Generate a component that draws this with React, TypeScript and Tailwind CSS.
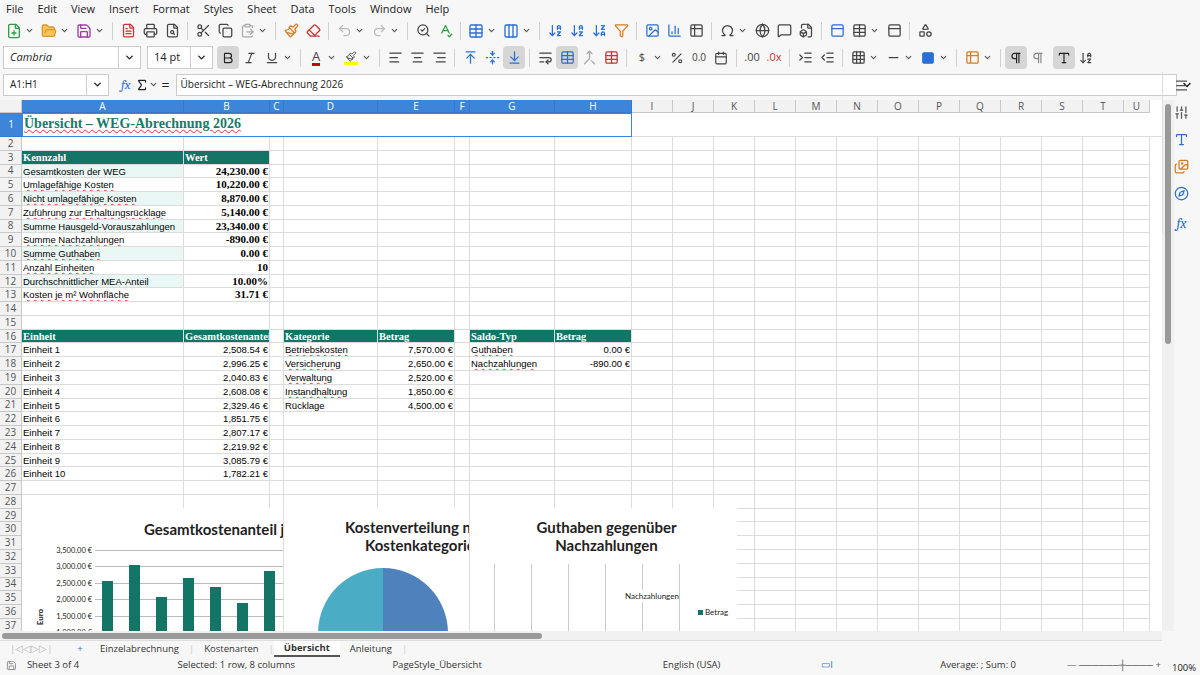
import React from 'react';
import {
  FilePlus, FolderOpen, Save, FileText, Printer, FileSearch, Scissors, Copy, ClipboardPaste, Paintbrush, Eraser,
  Undo2, Redo2, SearchCheck, SpellCheck, Table, Columns3, ArrowDownAZ, ArrowDownZA, Filter, Image, BarChart3,
  Table2, Omega, Globe, MessageSquare, FileBox, PanelTop, Shapes, ChevronDown, Bold, Italic, Underline,
  AlignLeft, AlignCenter, AlignRight, ArrowUpToLine, FoldVertical, ArrowDownToLine, WrapText, Merge,
  Percent, Calendar, Indent, Outdent, Grid3x3, Minus, Square, Pilcrow, Sigma, Menu, Sliders, Type, Images, Compass,
} from 'lucide-react';

const cols = [
  ['A', 162], ['B', 86], ['C', 14], ['D', 94], ['E', 77], ['F', 15], ['G', 85], ['H', 77],
  ['I', 41], ['J', 41], ['K', 41], ['L', 41], ['M', 41], ['N', 41], ['O', 41], ['P', 41], ['Q', 41], ['R', 41], ['S', 41], ['T', 41], ['U', 26],
] as const;

type Cell = { t: string; k?: 'h' | 'l' | 'lb' | 'v' | 'n' | 'sp' };
const kz = [
  ['Gesamtkosten der WEG', '24,230.00 €'], ['Umlagefähige Kosten', '10,220.00 €'], ['Nicht umlagefähige Kosten', '8,870.00 €'],
  ['Zuführung zur Erhaltungsrücklage', '5,140.00 €'], ['Summe Hausgeld-Vorauszahlungen', '23,340.00 €'], ['Summe Nachzahlungen', '-890.00 €'],
  ['Summe Guthaben', '0.00 €'], ['Anzahl Einheiten', '10'], ['Durchschnittlicher MEA-Anteil', '10.00%'], ['Kosten je m² Wohnfläche', '31.71 €'],
];
const einh = ['2,508.54 €', '2,996.25 €', '2,040.83 €', '2,608.08 €', '2,329.46 €', '1,851.75 €', '2,807.17 €', '2,219.92 €', '3,085.79 €', '1,782.21 €'];
const kat = [['Betriebskosten', '7,570.00 €'], ['Versicherung', '2,650.00 €'], ['Verwaltung', '2,520.00 €'], ['Instandhaltung', '1,850.00 €'], ['Rücklage', '4,500.00 €']];
const sal = [['Guthaben', '0.00 €'], ['Nachzahlungen', '-890.00 €']];

function rowCells(r: number): Record<number, Cell> {
  const c: Record<number, Cell> = {};
  if (r === 3) { c[0] = { t: 'Kennzahl', k: 'h' }; c[1] = { t: 'Wert', k: 'h' }; }
  if (r >= 4 && r <= 13) {
    const [a, b] = kz[r - 4];
    const alt = r % 2 === 0;
    c[0] = { t: a, k: alt ? 'lb' : 'l' }; c[1] = { t: b, k: 'v' };
  }
  if (r === 16) {
    c[0] = { t: 'Einheit', k: 'h' }; c[1] = { t: 'Gesamtkostenanteil', k: 'h' };
    c[3] = { t: 'Kategorie', k: 'h' }; c[4] = { t: 'Betrag', k: 'h' };
    c[6] = { t: 'Saldo-Typ', k: 'h' }; c[7] = { t: 'Betrag', k: 'h' };
  }
  if (r >= 17 && r <= 26) { c[0] = { t: `Einheit ${r - 16}` }; c[1] = { t: einh[r - 17], k: 'n' }; }
  if (r >= 17 && r <= 21) { c[3] = { t: kat[r - 17][0], k: 'sp' }; c[4] = { t: kat[r - 17][1], k: 'n' }; }
  if (r >= 17 && r <= 18) { c[6] = { t: sal[r - 17][0], k: 'sp' }; c[7] = { t: sal[r - 17][1], k: 'n' }; }
  return c;
}

const I = ({ children }: { children: React.ReactNode }) => (
  <div className="flex h-[22px] min-w-[22px] items-center justify-center px-[2px] text-[#444]">{children}</div>
);
const Dd = () => <ChevronDown size={9} strokeWidth={3} className="mr-1 text-[#555]" />;
const Sep = () => <div className="mx-1 h-[18px] w-px bg-[#d0d0d0]" />;

function Row({ r }: { r: number }) {
  const cells = rowCells(r);
  return (
    <div className="flex h-[13.77px]">
      <div className="flex w-[22px] shrink-0 items-center justify-center border-b border-r border-[#c8c8c8] bg-[#f2f2f2] text-[10px] text-[#555]">{r}</div>
      {cols.map(([n, w], i) => {
        const c = cells[i];
        let cls = 'border-b border-r border-[#dcdcdc] whitespace-nowrap px-[1px] text-[9.5px] leading-[13px] text-black';
        let font = '"Liberation Sans", sans-serif';
        if (c?.k === 'h') { cls += ' bg-[#127566] text-white font-bold'; font = '"Liberation Serif", serif'; }
        if (c?.k === 'lb') cls += ' bg-[#eaf8f5]';
        if (c?.k === 'v') { cls += ' text-right font-bold text-[11px]'; font = '"Liberation Serif", serif'; }
        if (c?.k === 'n') cls += ' text-right';
        const spell = c && (c.k === 'l' || c.k === 'lb' || c.k === 'sp');
        return (
          <div key={n} style={{ width: w, fontFamily: font }} className={`${cls} shrink-0 overflow-hidden`}>
            {c && (
              <span className={spell ? 'underline decoration-wavy decoration-[#d33] decoration-1' : c.k === 'h' ? 'text-[10.5px]' : ''}>{c.t}</span>
            )}
          </div>
        );
      })}
    </div>
  );
}

const bars = [2508, 2996, 2041, 2608, 2329, 1852, 2807];

export default function App() {
  return (
    <div className="flex h-[675px] w-[1200px] flex-col overflow-hidden bg-[#f7f7f7] text-[#222]" style={{ fontFamily: '"Open Sans", "Noto Sans", sans-serif' }}>
      <div className="flex h-[18px] items-center gap-[14px] px-[6px] text-[11px]">
        {['File', 'Edit', 'View', 'Insert', 'Format', 'Styles', 'Sheet', 'Data', 'Tools', 'Window', 'Help'].map(m => <span key={m}>{m}</span>)}
      </div>
      <div className="flex h-[25px] items-center px-[3px]">
        <I><FilePlus size={16} className="text-[#2f9e44]" /></I><Dd />
        <I><FolderOpen size={16} className="fill-[#f6c35c] text-[#d99a2b]" /></I><Dd />
        <I><Save size={16} className="text-[#a03ca8]" /></I><Dd /><Sep />
        <I><FileText size={15} className="text-[#c33]" /></I><I><Printer size={15} /></I><I><FileSearch size={15} /></I><Sep />
        <I><Scissors size={15} /></I><I><Copy size={15} /></I><I><ClipboardPaste size={15} className="text-[#aaa]" /></I><Dd /><Sep />
        <I><Paintbrush size={15} className="text-[#d97a1c]" /></I><I><Eraser size={15} className="text-[#c33]" /></I><Sep />
        <I><Undo2 size={15} className="text-[#bbb]" /></I><Dd /><I><Redo2 size={15} className="text-[#bbb]" /></I><Dd /><Sep />
        <I><SearchCheck size={15} /></I><I><SpellCheck size={15} className="text-[#2f9e44]" /></I><Sep />
        <I><Table size={16} className="text-[#2a6fd6]" /></I><Dd /><I><Columns3 size={16} className="text-[#2a6fd6]" /></I><Dd /><Sep />
        <I><ArrowDownAZ size={15} className="text-[#2a6fd6]" /></I><I><ArrowDownAZ size={15} className="text-[#2a6fd6]" /></I><I><ArrowDownZA size={15} className="text-[#2a6fd6]" /></I><I><Filter size={15} className="text-[#d97a1c]" /></I><Sep />
        <I><Image size={15} className="text-[#2a6fd6]" /></I><I><BarChart3 size={15} className="text-[#2a6fd6]" /></I><I><Table2 size={15} /></I><Sep />
        <I><Omega size={15} /></I><Dd /><I><Globe size={15} /></I><I><MessageSquare size={15} /></I><I><FileBox size={15} /></I><Sep />
        <I><PanelTop size={15} className="text-[#2a6fd6]" /></I><I><Table size={15} /></I><Dd /><I><PanelTop size={15} /></I><Sep /><I><Shapes size={15} /></I>
      </div>
      <div className="flex h-[29px] items-center px-[3px]">
        <div className="flex h-[23px] w-[138px] items-center justify-between border border-[#ccc] bg-white pl-[6px] text-[11px] italic">Cambria<span className="flex h-full w-[22px] items-center justify-center border-l border-[#ccc]"><ChevronDown size={11} strokeWidth={3} /></span></div>
        <div className="ml-[6px] flex h-[23px] w-[66px] items-center justify-between border border-[#ccc] bg-white pl-[6px] text-[11px]">14 pt<span className="flex h-full w-[22px] items-center justify-center border-l border-[#ccc]"><ChevronDown size={11} strokeWidth={3} /></span></div>
        <div className="ml-[4px] flex h-[23px] w-[22px] items-center justify-center rounded bg-[#d6d6d6]"><Bold size={14} /></div>
        <I><Italic size={14} /></I><I><Underline size={14} /></I><Dd /><Sep />
        <I><span className="border-b-[3px] border-[#c00] text-[13px] leading-[14px]">A</span></I><Dd />
        <I><Paintbrush size={14} className="border-b-[3px] border-[#ff0]" /></I><Dd /><Sep />
        <I><AlignLeft size={15} /></I><I><AlignCenter size={15} /></I><I><AlignRight size={15} /></I><Sep />
        <I><ArrowUpToLine size={15} className="text-[#2a6fd6]" /></I><I><FoldVertical size={15} className="text-[#2a6fd6]" /></I>
        <div className="flex h-[23px] w-[22px] items-center justify-center rounded bg-[#d6d6d6]"><ArrowDownToLine size={15} className="text-[#2a6fd6]" /></div><Sep />
        <I><WrapText size={15} /></I>
        <div className="flex h-[23px] w-[22px] items-center justify-center rounded bg-[#d6d6d6]"><Table size={15} className="text-[#2a6fd6]" /></div>
        <I><Merge size={15} className="text-[#aaa]" /></I><I><Table size={15} className="text-[#c33]" /></I><Sep />
        <I><span className="text-[11px]">$</span></I><Dd /><I><Percent size={14} /></I><I><span className="text-[10px]">0.0</span></I><I><Calendar size={14} /></I><Sep />
        <I><span className="text-[11px]">.00</span></I><I><span className="text-[11px] text-[#c33]">.0x</span></I><Sep />
        <I><Indent size={15} /></I><I><Outdent size={15} /></I><Sep />
        <I><Grid3x3 size={15} /></I><Dd /><I><Minus size={15} /></I><Dd /><I><Square size={14} className="fill-[#2a6fd6] text-[#2a6fd6]" /></I><Dd /><Sep />
        <I><Table2 size={15} className="text-[#d97a1c]" /></I><Dd /><Sep />
        <div className="flex h-[23px] w-[22px] items-center justify-center rounded bg-[#d6d6d6]"><Pilcrow size={14} /></div><I><Pilcrow size={14} className="text-[#888]" /></I>
        <div className="ml-1 flex h-[23px] w-[22px] items-center justify-center rounded bg-[#d6d6d6]"><Type size={14} /></div><I><ArrowDownAZ size={14} /></I>
      </div>
      <div className="flex h-[25px] items-center px-[3px] text-[10px]">
        <div className="flex h-[22px] w-[106px] items-center justify-between border border-[#ccc] bg-white pl-[6px]">A1:H1<span className="flex h-full w-[22px] items-center justify-center border-l border-[#ccc]"><ChevronDown size={11} strokeWidth={3} /></span></div>
        <span className="ml-[12px] font-serif text-[13px] italic text-[#2a6fd6]">fx</span>
        <Sigma size={14} className="ml-[4px]" /><Dd /><span className="text-[14px]">=</span>
        <div className="ml-[6px] flex h-[22px] flex-1 items-center border border-[#ccc] bg-white pl-[4px]">Übersicht – WEG-Abrechnung 2026</div>
        <ChevronDown size={12} strokeWidth={3} className="mx-[4px]" />
      </div>
      <div className="mt-[3px] flex flex-1 overflow-hidden">
        <div className="flex w-[1162px] flex-col">
          <div className="relative h-[531px] overflow-hidden bg-white">
            <div className="flex h-[13px] text-[10px]">
              <div className="w-[22px] shrink-0 border-b border-r border-[#c8c8c8] bg-[#f2f2f2]" />
              {cols.map(([n, w], i) => (
                <div key={n} style={{ width: w }} className={`flex shrink-0 items-center justify-center border-r border-b ${i < 8 ? 'border-[#3b76c8] bg-[#3d85d8] text-white' : 'border-[#c8c8c8] bg-[#f2f2f2] text-[#555]'}`}>{n}</div>
              ))}
            </div>
            <div className="flex h-[24px]">
              <div className="flex w-[22px] shrink-0 items-center justify-center border-b border-[#3b76c8] bg-[#3d85d8] text-[10px] text-white">1</div>
              <div className="flex w-[610px] shrink-0 items-end border border-[#3d85d8] pb-[2px] pl-[1px] text-[14px] font-bold text-[#1a7a6a] underline decoration-wavy decoration-[#d33] decoration-1" style={{ fontFamily: '"Liberation Serif", serif' }}>Übersicht – WEG-Abrechnung 2026</div>
              <div className="flex-1 border-b border-[#dcdcdc]" />
            </div>
            {Array.from({ length: 36 }, (_, k) => <Row key={k} r={k + 2} />)}

            <div className="absolute left-[22px] top-[408px] h-[130px] w-[262px] overflow-hidden border-r border-[#ddd] bg-white" style={{ fontFamily: '"Lato", sans-serif' }}>
              <div className="mt-[10px] whitespace-nowrap pl-[122px] text-[15px] font-bold">Gesamtkostenanteil je</div>
              <div className="relative mt-[4px] h-[100px]">
                <span className="absolute left-[10px] top-[66px] -rotate-90 text-[8px] font-bold">Euro</span>
                {['3,500.00 €', '3,000.00 €', '2,500.00 €', '2,000.00 €', '1,500.00 €', '1,000.00 €'].map((l, i) => (
                  <div key={l} className="absolute left-[30px] flex w-[232px] items-center" style={{ top: i * 16.5 }}>
                    <span className="w-[40px] text-right text-[7.5px]">{l}</span>
                    <div className="ml-[3px] h-px flex-1 bg-[#bbb]" />
                  </div>
                ))}
                {bars.map((b, i) => (
                  <div key={i} className="absolute w-[11px] bg-[#127566]" style={{ left: 80 + i * 27, top: 4 + (3500 - b) * 0.033, height: 200 }} />
                ))}
              </div>
            </div>
            <div className="absolute left-[284px] top-[408px] h-[130px] w-[186px] overflow-hidden border-r border-[#ddd] bg-white" style={{ fontFamily: '"Lato", sans-serif' }}>
              <div className="mt-[10px] whitespace-nowrap pl-[61px] text-[15px] font-bold leading-[18px]">Kostenverteilung na<br /><span className="pl-[20px]">Kostenkategorie</span></div>
              <div className="absolute left-[34px] top-[60px] flex h-[130px] w-[130px] overflow-hidden rounded-full">
                <div className="w-1/2 bg-[#4bacc6]" /><div className="w-1/2 bg-[#4f81bd]" />
              </div>
            </div>
            <div className="absolute left-[470px] top-[408px] h-[130px] w-[267px] overflow-hidden bg-white" style={{ fontFamily: '"Lato", sans-serif' }}>
              <div className="mt-[10px] pl-[6px] text-center text-[15px] font-bold leading-[18px]">Guthaben gegenüber<br />Nachzahlungen</div>
              {[0, 1, 2, 3, 4, 5].map(i => <div key={i} className="absolute top-[56px] h-[80px] w-px bg-[#ccc]" style={{ left: 24 + i * 37 }} />)}
              <span className="absolute left-[155px] top-[82px] bg-white text-[8px]">Nachzahlungen</span>
              <span className="absolute left-[228px] top-[98px] flex items-center gap-[2px] text-[8px]"><span className="h-[5px] w-[5px] bg-[#127566]" />Betrag</span>
            </div>
          </div>
          <div className="flex h-[9px] items-center bg-[#f0f0f0] px-[2px]"><div className="h-[6px] w-[540px] rounded bg-[#999]" /></div>
          <div className="flex h-[17px] items-center border-t border-[#ddd] text-[9.5px] text-[#333]">
            <span className="w-[70px] pl-[10px] text-[#bbb]">|◁◁▷▷|</span>
            <span className="w-[20px] text-center text-[#2a6fd6]">+</span>
            <span className="px-[10px]">Einzelabrechnung</span><span className="text-[#ccc]">|</span>
            <span className="px-[10px]">Kostenarten</span><span className="text-[#ccc]">|</span>
            <span className="border-b-2 border-[#555] bg-white px-[10px] font-bold">Übersicht</span>
            <span className="px-[10px]">Anleitung</span><span className="text-[#ccc]">|</span>
          </div>
          <div className="flex h-[17px] items-center text-[9.5px] text-[#333]">
            <Save size={11} className="ml-[6px] text-[#888]" />
            <span className="ml-[10px] w-[152px]">Sheet 3 of 4</span>
            <span className="w-[217px]">Selected: 1 row, 8 columns</span>
            <span className="w-[273px]">PageStyle_Übersicht</span>
            <span className="w-[160px]">English (USA)</span>
            <span className="w-[120px] text-[#2a6fd6]">▭I</span>
            <span className="w-[128px]">Average: ; Sum: 0</span>
            <span className="w-[96px] text-[#555]">— ──────┼──── +</span>
          </div>
        </div>
        <div className="flex w-[38px] flex-col">
          <div className="h-[531px] w-[12px] bg-[#f0f0f0]"><div className="mx-[3px] mt-[4px] h-[240px] w-[6px] rounded bg-[#999]" /></div>
        </div>
      </div>
      <div className="absolute left-[1162px] top-[72px] flex w-[38px] flex-col items-center gap-[12px] border-l border-[#ddd] pt-[6px] text-[#555]">
        <Menu size={15} /><Sliders size={15} /><Type size={15} className="text-[#2a6fd6]" /><Images size={15} className="text-[#d97a1c]" /><Compass size={15} className="text-[#2a6fd6]" /><span className="font-serif text-[14px] italic text-[#2a6fd6]">fx</span>
      </div>
      <span className="absolute left-[1172px] top-[661px] text-[9.5px]">100%</span>
    </div>
  );
}
